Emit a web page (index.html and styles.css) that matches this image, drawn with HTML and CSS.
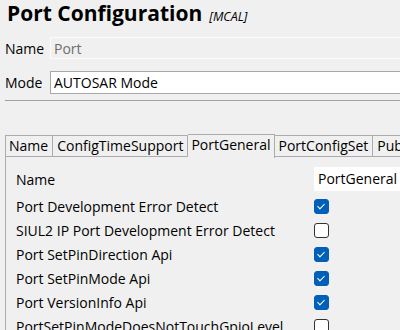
FILE: index.html
```html
<!DOCTYPE html>
<html lang="en">
<head>
  <meta charset="UTF-8" />
  <title>Port Configuration</title>
  <link rel="stylesheet" href="styles.css">
</head>
<body>
  <header class="title">
    <h1>Port Configuration</h1>
    <span class="tag">[MCAL]</span>
  </header>

  <div class="field-row">
    <label>Name</label>
    <div class="field disabled">Port</div>
  </div>
  <div class="field-row">
    <label>Mode</label>
    <div class="field">AUTOSAR Mode</div>
  </div>
  <hr class="sep" />

  <div class="tabs">
    <div class="tab">Name</div>
    <div class="tab">ConfigTimeSupport</div>
    <div class="tab active">PortGeneral</div>
    <div class="tab">PortConfigSet</div>
    <div class="tab">PublishedInformation</div>
  </div>

  <section class="panel">
    <div class="row first">
      <span>Name</span>
      <div class="input">PortGeneral</div>
    </div>
    <div class="row">
      <span>Port Development Error Detect</span>
      <span class="check on"></span>
    </div>
    <div class="row">
      <span>SIUL2 IP Port Development Error Detect</span>
      <span class="check"></span>
    </div>
    <div class="row">
      <span>Port SetPinDirection Api</span>
      <span class="check on"></span>
    </div>
    <div class="row">
      <span>Port SetPinMode Api</span>
      <span class="check on"></span>
    </div>
    <div class="row">
      <span>Port VersionInfo Api</span>
      <span class="check on"></span>
    </div>
    <div class="row">
      <span>PortSetPinModeDoesNotTouchGpioLevel</span>
      <span class="check"></span>
    </div>
  </section>
</body>
</html>
```

FILE: styles.css
```css
* {
  box-sizing: border-box;
}
html, body {
  overflow: hidden;
}
body {
  margin: 0;
  width: 400px;
  height: 330px;
  background: #f0f0f0;
  color: #000;
  font-family: "Open Sans", sans-serif;
  font-size: 14px;
}
.title {
  display: flex;
  align-items: baseline;
  gap: 7px;
  padding: 1px 0 0 7px;
  height: 37px;
}
.title h1 {
  margin: 0;
  font-size: 21px;
  font-weight: bold;
  line-height: 25px;
}
.tag {
  font-style: italic;
  font-size: 12.5px;
}
.field-row {
  display: flex;
  align-items: center;
  height: 22px;
  margin-bottom: 12px;
}
.field-row + .field-row {
  height: 23px;
  margin-bottom: 0;
}
.field-row label {
  width: 50px;
  padding-left: 5px;
}
.field {
  flex: 1;
  height: 100%;
  line-height: 21px;
  padding-left: 3px;
  background: #fff;
  border: 1px solid #a8a8a8;
  border-right: none;
}
.field.disabled {
  background: #f0f0f0;
  border-color: #fbfbfb;
  color: #6d6d6d;
}
.sep {
  margin: 6px 0 0 5px;
  border: none;
  border-top: 1px solid #a0a0a0;
}
.tabs {
  display: flex;
  margin: 33px 0 0 5px;
  height: 23px;
  align-items: flex-end;
  white-space: nowrap;
}
.tab {
  height: 22px;
  line-height: 20px;
  padding: 0 4px;
  border: 1px solid #acacac;
  border-left: none;
}
.tab:first-child {
  border-left: 1px solid #acacac;
  padding: 0 4px 0 3px;
}
.tab.active {
  height: 24px;
  padding: 0 3px;
  border-bottom: none;
  margin-bottom: -1px;
  background: #f0f0f0;
  position: relative;
}
.panel {
  margin-left: 5px;
  border-left: 1px solid #acacac;
  padding: 10px 0 0 10px;
}
.row {
  display: flex;
  align-items: center;
  justify-content: space-between;
  height: 24px;
}
.row.first {
  margin-bottom: 3px;
}
.input {
  width: 86px;
  height: 24px;
  line-height: 24px;
  background: #fff;
  padding-left: 4px;
}
.row .check {
  margin-right: 71px;
}
.check {
  width: 15px;
  height: 15px;
  border: 1px solid #333;
  border-radius: 3px;
  background: #fff;
}
.check.on {
  background: #005fb8;
  border-color: #005fb8;
  position: relative;
}
.check.on::after {
  content: "";
  position: absolute;
  left: 4px;
  top: 2px;
  width: 3px;
  height: 6px;
  border: solid #fff;
  border-width: 0 1px 1px 0;
  transform: rotate(45deg);
}
```
